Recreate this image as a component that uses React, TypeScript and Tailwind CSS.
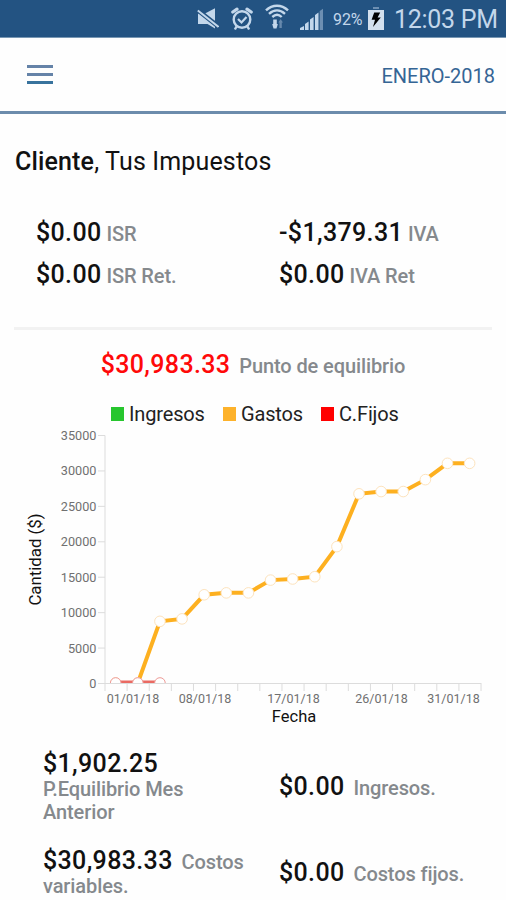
import clsx from 'clsx'

const gastos = [
  0, 0, 8700, 9050, 12450, 12720, 12720, 14520, 14680, 15000, 19250, 26700, 27020, 27020, 28700,
  31000, 31000,
]
const fijos = [0, 0, 0]

const yTicks = [0, 5000, 10000, 15000, 20000, 25000, 30000, 35000]
const xLabels = [
  { x: 133, text: '01/01/18' },
  { x: 205, text: '08/01/18' },
  { x: 293.5, text: '17/01/18' },
  { x: 381.5, text: '26/01/18' },
  { x: 453.5, text: '31/01/18' },
]

const legend = [
  { label: 'Ingresos', color: 'bg-[#27c62e]', width: 'w-[112px]' },
  { label: 'Gastos', color: 'bg-[#fdb22b]', width: 'w-[98px]' },
  { label: 'C.Fijos', color: 'bg-[#ff0000]', width: 'w-[78px]' },
]

const LEFT = 105
const STEP = 22.12
const TOP = 9
const BOTTOM = 257

const px = (i: number) => LEFT + 10.7 + i * STEP
const py = (value: number) => BOTTOM - (value / 35000) * (BOTTOM - TOP)

function MutedIcon() {
  return (
    <svg className="w-[22px] h-[22px]" viewBox="0 0 22 22" fill="#c3d7eb">
      <path d="M1 5.5h7L18 .3v20.2L10.5 16H1z" />
      <path d="M0 1.6 22 19" stroke="#235382" strokeWidth="4.6" />
      <path d="M.8 2.5 21.5 18.9" stroke="#c3d7eb" strokeWidth="2" />
    </svg>
  )
}

function AlarmIcon() {
  return (
    <svg className="w-[22px] h-6" viewBox="0 0 22 24" fill="none" stroke="#c3d7eb">
      <circle cx="11" cy="12.5" r="8.3" strokeWidth="2.4" />
      <path d="M7 12l3.5 3.5 5-5.5" strokeWidth="2.2" />
      <path d="M1.8 5 6 2.2M20.2 5 16 2.2" strokeWidth="3.2" strokeLinecap="round" />
      <path d="M5.5 19.5 3.9 22.5M16.5 19.5l1.6 3" strokeWidth="2.4" />
    </svg>
  )
}

function WifiIcon() {
  return (
    <svg className="w-6 h-[26px]" viewBox="0 0 24 26" fill="none" stroke="#c3d7eb">
      <path d="M1 6.3C7.5.2 16.5.2 23 6.3" strokeWidth="2.5" />
      <path d="M4 9.8c5-4.6 11-4.6 16 0" strokeWidth="2.4" />
      <path d="M7.3 13c3-2.8 6.5-2.8 9.4 0" strokeWidth="2.4" />
      <path d="M10 15.5v6" strokeWidth="3.6" />
      <path d="M7.2 20h5.6L11.5 24.5h-3z" fill="#c3d7eb" stroke="none" />
      <path d="M15.6 24v-7" stroke="#6689ad" strokeWidth="2.4" />
      <path d="M13.4 18.5 15.6 15l2.4 3.5z" fill="#6689ad" stroke="none" />
    </svg>
  )
}

function SignalIcon() {
  return (
    <svg className="w-6 h-[22px]" viewBox="0 0 24 22" fill="#c3d7eb">
      <path d="M0 22v-2l4-2v4zM5 22v-6l3.6-2.5V22zM10 22V11.5L13.6 9v13zM15 22V7l3.5-2.5V22z" />
      <path d="M19.7 22V3L23 .7V22z" fill="#6d8fb2" />
    </svg>
  )
}

function BatteryIcon() {
  return (
    <svg className="w-4 h-[23px]" viewBox="0 0 16 23">
      <path d="M5 0h6v2H5z" fill="#6d8fb2" />
      <path d="M0 3h16v20H0z" fill="#d3e0ee" />
      <path d="M6.2 5.5h6L9.6 10.6h3.2L5 20l2-7.2H3.6z" fill="#000" />
    </svg>
  )
}

function StatusBar() {
  return (
    <div className="h-[38px] bg-[#235382] border-b border-[#7897b3] flex items-center text-[#c3d7eb] pl-[197px]">
      <MutedIcon />
      <div className="ml-3 mt-px flex">
        <AlarmIcon />
      </div>
      <div className="ml-3 mb-1 flex">
        <WifiIcon />
      </div>
      <div className="ml-[11px] mt-px flex">
        <SignalIcon />
      </div>
      <span className="ml-[9px] w-[31px] mt-[2px] text-[16px] tracking-[-0.1px] whitespace-nowrap">
        92%
      </span>
      <div className="ml-1 mb-px flex">
        <BatteryIcon />
      </div>
      <span className="ml-[10px] mt-[2px] text-[25px] tracking-[-0.3px] whitespace-nowrap">12:03 PM</span>
    </div>
  )
}

function Header() {
  return (
    <header className="h-[76px] border-b-[3px] border-[#6c8cac] flex items-center justify-between pl-[27px] pr-[11px]">
      <div className="flex flex-col gap-[5px]">
        <div className="w-[26px] h-[3px] bg-[#6583a8]" />
        <div className="w-[26px] h-[3px] bg-[#6583a8]" />
        <div className="w-[26px] h-[3px] bg-[#38739d]" />
      </div>
      <span className="mt-[3px] text-[20px] text-[#356595]">ENERO-2018</span>
    </header>
  )
}

type AmountProps = {
  value: string
  label: string
  wide?: boolean
  red?: boolean
}

function Amount({ value, label, wide, red }: AmountProps) {
  return (
    <div className="text-[20px] leading-[23px]">
      <span
        className={clsx(
          'text-[25px] leading-[28px] font-medium tracking-[0.35px]',
          red ? 'text-[#ff0909]' : 'text-[#111]',
        )}
      >
        {value}
      </span>
      <span
        className={clsx('font-medium text-[#85898d] tracking-[-0.1px]', wide ? 'ml-[4px]' : 'ml-0')}
      >
        {' '}
        {label}
      </span>
    </div>
  )
}

function Legend() {
  return (
    <div className="flex items-center pl-[111px] h-6">
      {legend.map((item) => (
        <div key={item.label} className={clsx('flex items-center', item.width)}>
          <div className={clsx('w-[13px] h-[14px] mr-[5px]', item.color)} />
          <span className="text-[20px] tracking-[-0.15px] text-[#222] whitespace-nowrap">
            {item.label}
          </span>
        </div>
      ))}
    </div>
  )
}

function Chart() {
  const line = (data: number[]) => data.map((v, i) => `${px(i)},${py(v)}`).join(' ')

  return (
    <svg className="block w-[506px] h-[304px] font-['Roboto']" viewBox="0 0 506 304">
      <defs>
        <clipPath id="plot">
          <rect x={LEFT} y="0" width="390" height={BOTTOM} />
        </clipPath>
      </defs>
      <g stroke="#dcdcdc" strokeWidth="1" fill="none">
        <path d={`M${LEFT - 7} ${TOP + 0.5}H${LEFT}V${BOTTOM + 8}`} />
        <path d={`M${LEFT - 7} ${BOTTOM + 0.5}H481`} />
        {yTicks.map((t) => (
          <path key={t} d={`M${LEFT - 7} ${py(t) + 0.5}h7`} />
        ))}
        {gastos.map((_, i) => (
          <path key={i} d={`M${LEFT + (i + 1) * STEP} ${BOTTOM}v8`} />
        ))}
      </g>
      <g fill="#707070" fontSize="12.7">
        {yTicks.map((t) => (
          <text key={t} x="96.5" y={py(t) + 5} textAnchor="end">
            {t}
          </text>
        ))}
        {xLabels.map((l) => (
          <text key={l.text} x={l.x} y="277" textAnchor="middle" fontSize="12.5">
            {l.text}
          </text>
        ))}
      </g>
      <text x="294" y="296" textAnchor="middle" fontSize="16.5" fill="#111">
        Fecha
      </text>
      <text transform="translate(41 133.5) rotate(-90)" textAnchor="middle" fontSize="16.8" fill="#111">
        Cantidad ($)
      </text>
      <g clipPath="url(#plot)" fill="none">
        <polyline points={line(gastos)} stroke="#fdb020" strokeWidth="4" />
        {gastos.map((v, i) => (
          <circle key={i} cx={px(i)} cy={py(v)} r="5.3" fill="#fff" stroke="#fde3bd" />
        ))}
        <polyline points={line(fijos)} stroke="#ea6a62" strokeWidth="5" />
        {fijos.map((v, i) => (
          <circle key={i} cx={px(i)} cy={py(v)} r="5.3" fill="#fff" stroke="#ee9a96" />
        ))}
      </g>
    </svg>
  )
}

export default function App() {
  return (
    <div className="w-[506px] h-[900px] overflow-hidden bg-[#fefefe] font-['Roboto',sans-serif]">
      <StatusBar />
      <Header />
      <h1 className="pl-[15px] pt-[33px] text-[25px] leading-[30px] tracking-[0.15px] text-[#111]">
        <span className="font-medium">Cliente</span>, Tus Impuestos
      </h1>
      <div className="mt-[42px] pl-9 grid grid-cols-[243px_1fr] gap-y-3.5">
        <Amount value="$0.00" label="ISR" />
        <Amount value="-$1,379.31" label="IVA" />
        <Amount value="$0.00" label="ISR Ret." />
        <Amount value="$0.00" label="IVA Ret" />
      </div>
      <div className="mt-[38px] mx-[14px] h-[3px] bg-[#f2f2f2]" />
      <div className="mt-[21px] flex justify-center">
        <Amount value="$30,983.33" label="Punto de equilibrio" wide red />
      </div>
      <div className="mt-[23px]">
        <Legend />
      </div>
      <Chart />
      <div className="mt-[20px] pl-[43px] grid grid-cols-[236px_1fr] gap-y-[23px] items-center">
        <div className="w-[210px]">
          <Amount value="$1,902.25" label="P.Equilibrio Mes Anterior" />
        </div>
        <Amount value="$0.00" label="Ingresos." wide />
        <div className="w-[210px]">
          <Amount value="$30,983.33" label="Costos variables." wide />
        </div>
        <Amount value="$0.00" label="Costos fijos." wide />
      </div>
    </div>
  )
}
